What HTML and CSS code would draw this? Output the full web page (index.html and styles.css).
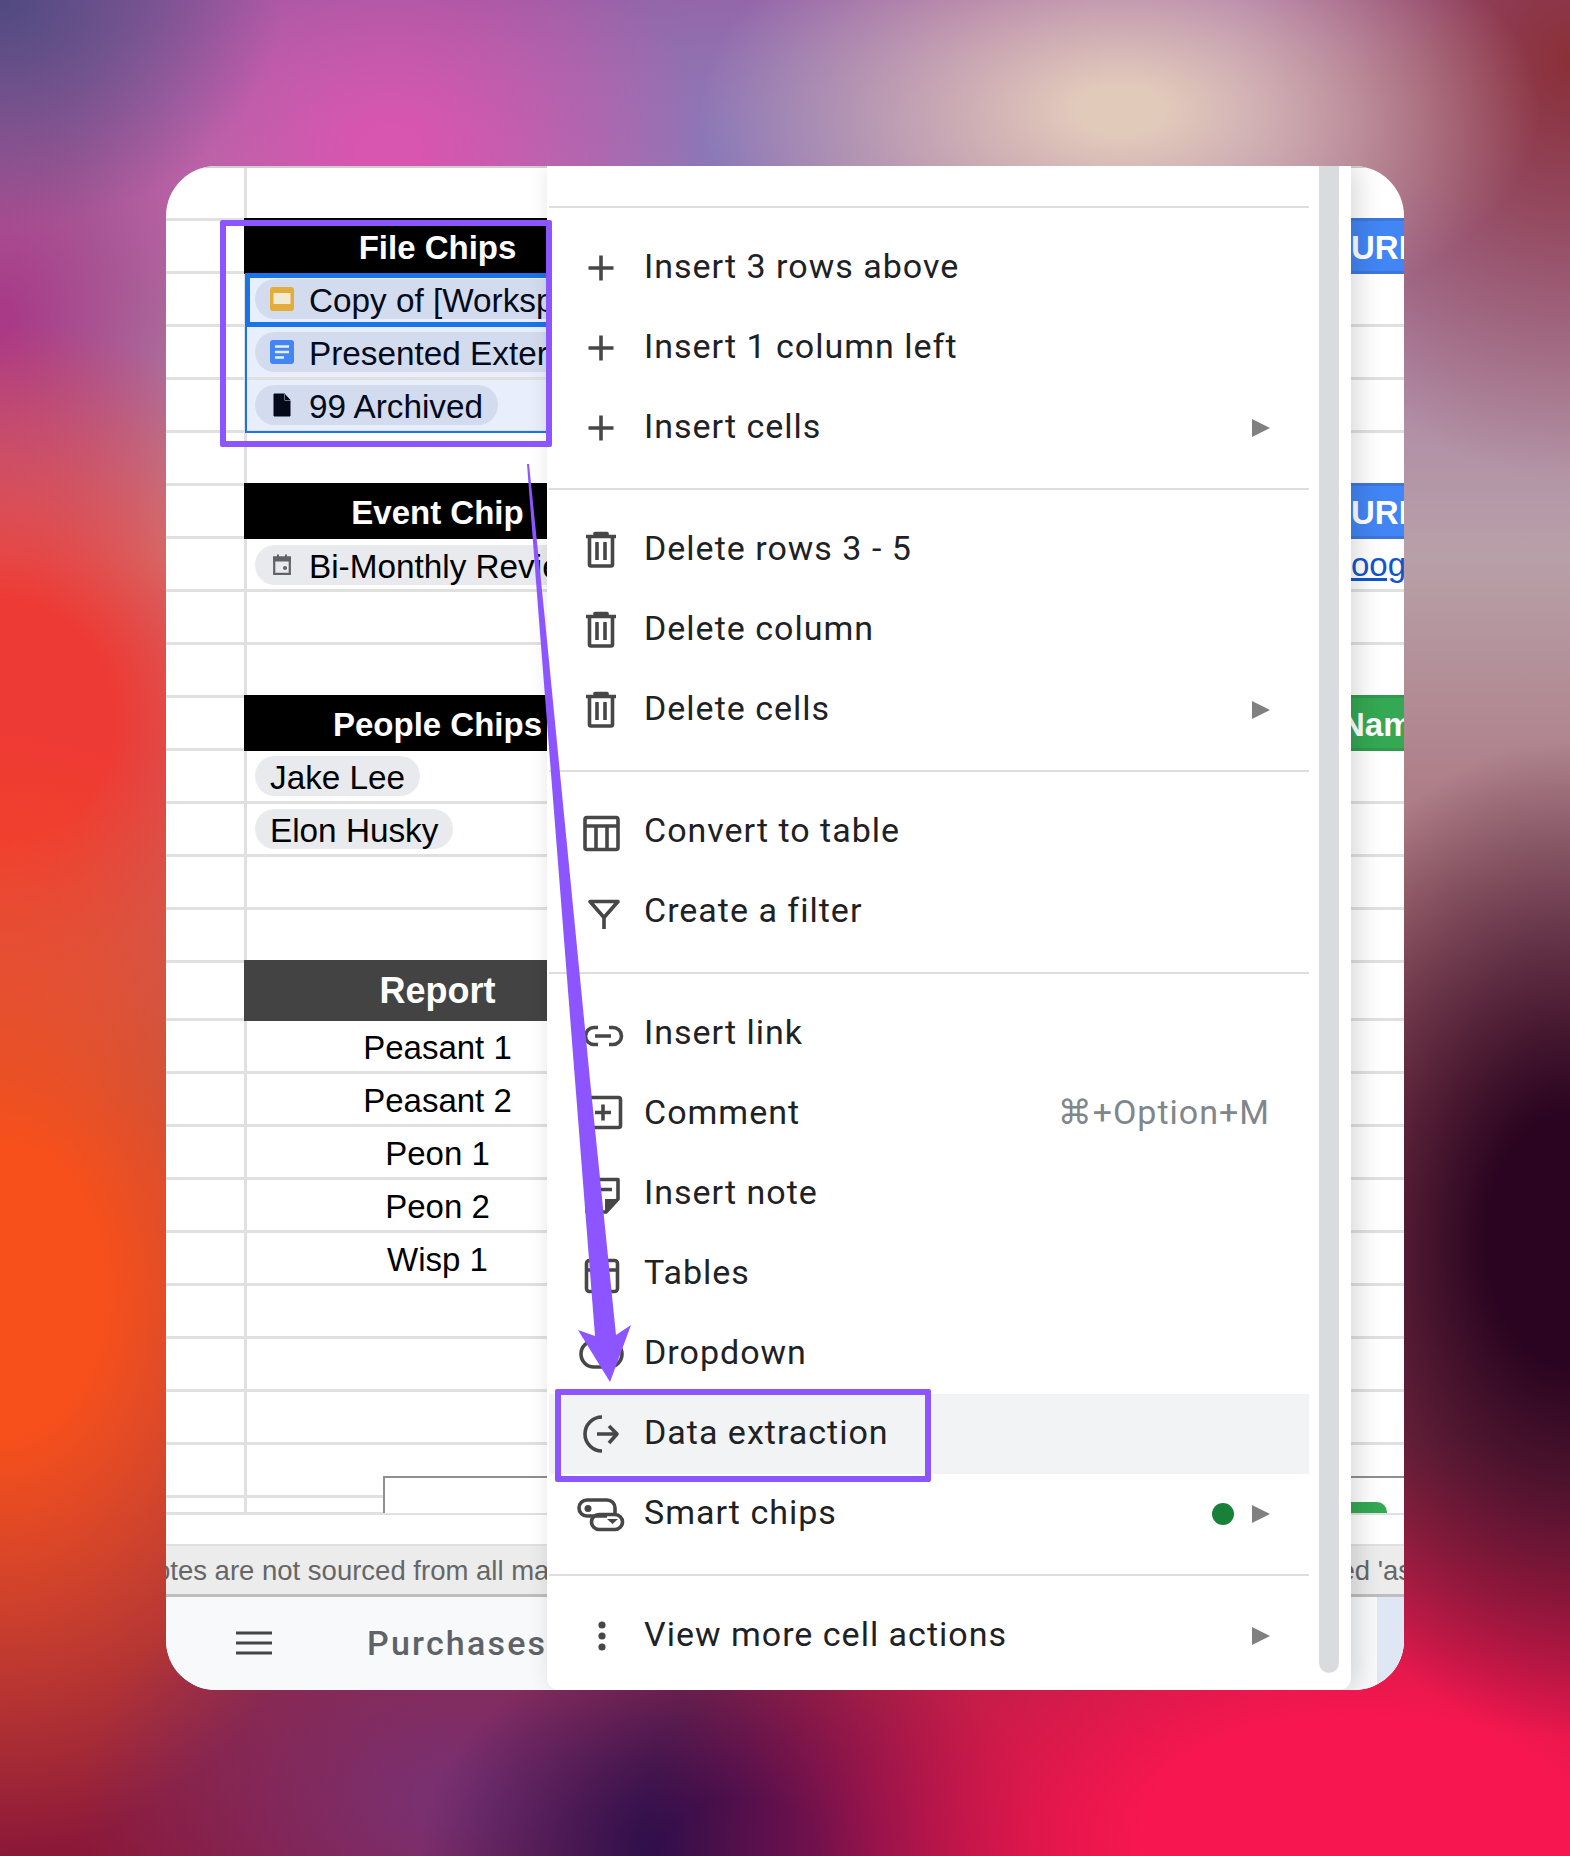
FILE: index.html
```html
<!DOCTYPE html>
<html lang="en">
<head>
<meta charset="utf-8">
<title>Smart chips data extraction</title>
<link rel="stylesheet" href="styles.css">
</head>
<body>
<div class="stage">
  <div class="card">
    <div class="sheet">
      <div class="row first"><div class="gut"></div><div class="cell"></div><div class="right"></div></div>
      <div class="row"><div class="gut"></div><div class="cell head">File Chips</div><div class="right"><div class="rhead blue">URL</div></div></div>
      <div class="row"><div class="gut"></div><div class="cell picked"><span class="chip picked-chip"><svg class="ci" viewBox="0 0 24 24"><rect x="0" y="0" width="24" height="24" rx="3" fill="#e2ad39"/><rect x="3.5" y="6" width="17" height="11" fill="#f3ead2"/></svg>Copy of [Workspace Template]</span></div><div class="right"></div></div>
      <div class="row"><div class="gut"></div><div class="cell picked"><span class="chip picked-chip"><svg class="ci" viewBox="0 0 24 24"><rect x="0" y="0" width="24" height="24" rx="3" fill="#4285f4"/><path d="M5 6.5H19M5 12H19M5 17.5H14" stroke="#e8eefb" stroke-width="2.4"/></svg>Presented External Deck</span></div><div class="right"></div></div>
      <div class="row"><div class="gut"></div><div class="cell picked"><span class="chip picked-chip"><svg class="ci" viewBox="0 0 24 24"><path d="M4 1H15L20 7V23H4Z" fill="#040a1a" stroke="#040a1a" stroke-linejoin="round"/><path d="M14.5 1V7.5H21V1Z" fill="#d3dcee"/><path d="M15 1L20.5 7H15Z" fill="#040a1a"/></svg>99 Archived</span></div><div class="right"></div></div>
      <div class="row"><div class="gut"></div><div class="cell"></div><div class="right"></div></div>
      <div class="row"><div class="gut"></div><div class="cell head">Event Chip</div><div class="right"><div class="rhead blue">URL</div></div></div>
      <div class="row"><div class="gut"></div><div class="cell"><span class="chip"><svg class="ci" viewBox="0 0 24 24"><path d="M4.2 4.5H19.8V20.8H4.2Z" fill="none" stroke="#5f6368" stroke-width="2.2"/><path d="M3 3.5H21V8.5H3Z M7 1.5H9V4H7Z M15 1.5H17V4H15Z" fill="#5f6368"/><rect x="13" y="13" width="4" height="4" rx="2" fill="#5f6368"/></svg>Bi-Monthly Review</span></div><div class="right"><a class="rlink">oogle.com</a></div></div>
      <div class="row"><div class="gut"></div><div class="cell"></div><div class="right"></div></div>
      <div class="row"><div class="gut"></div><div class="cell"></div><div class="right"></div></div>
      <div class="row"><div class="gut"></div><div class="cell head">People Chips</div><div class="right"><div class="rhead green"><span class="nam">Name</span></div></div></div>
      <div class="row"><div class="gut"></div><div class="cell"><span class="chip">Jake Lee</span></div><div class="right"></div></div>
      <div class="row"><div class="gut"></div><div class="cell"><span class="chip">Elon Husky</span></div><div class="right"></div></div>
      <div class="row"><div class="gut"></div><div class="cell"></div><div class="right"></div></div>
      <div class="row"><div class="gut"></div><div class="cell"></div><div class="right"></div></div>
      <div class="row tall"><div class="gut"></div><div class="cell head report">Report</div><div class="right"></div></div>
      <div class="row"><div class="gut"></div><div class="cell mid">Peasant 1</div><div class="right"></div></div>
      <div class="row"><div class="gut"></div><div class="cell mid">Peasant 2</div><div class="right"></div></div>
      <div class="row"><div class="gut"></div><div class="cell mid">Peon 1</div><div class="right"></div></div>
      <div class="row"><div class="gut"></div><div class="cell mid">Peon 2</div><div class="right"></div></div>
      <div class="row"><div class="gut"></div><div class="cell mid">Wisp 1</div><div class="right"></div></div>
      <div class="row"><div class="gut"></div><div class="cell"></div><div class="right"></div></div>
      <div class="row"><div class="gut"></div><div class="cell"></div><div class="right"></div></div>
      <div class="row"><div class="gut"></div><div class="cell"></div><div class="right"></div></div>
      <div class="row"><div class="gut"></div><div class="cell"></div><div class="right"></div></div>
      <div class="row stub"><div class="gut"></div><div class="cell"></div><div class="right"></div></div>
    </div>
    <div class="sheet-gap"></div>
    <div class="status"><span class="note-left">otes are not sourced from all markets</span><span class="note-right">ed 'as</span></div>
    <div class="tabs">
      <svg class="burger" viewBox="0 0 36 24"><path d="M0 2H36M0 12H36M0 22H36" stroke="#444" stroke-width="3"/></svg>
      <span class="tab-name">Purchases</span>
      <span class="tab-tint"></span>
    </div>

    <div class="sel-box"></div>
    <div class="sel-active"></div>
    <div class="embed"><span class="embed-chip"></span></div>

    <div class="menu">
      <div class="menu-list">
        <div class="sep"></div>
        <div class="item"><svg class="ico" viewBox="0 0 48 48"><path d="M11.500 24H36.500M24 11.500V36.500"/></svg><span class="lbl">Insert 3 rows above</span></div>
        <div class="item"><svg class="ico" viewBox="0 0 48 48"><path d="M11.500 24H36.500M24 11.500V36.500"/></svg><span class="lbl">Insert 1 column left</span></div>
        <div class="item"><svg class="ico" viewBox="0 0 48 48"><path d="M11.500 24H36.500M24 11.500V36.500"/></svg><span class="lbl">Insert cells</span><span class="tri"></span></div>
        <div class="sep"></div>
        <div class="item"><svg class="ico" viewBox="0 0 48 48"><path d="M9 10.500H39M18 10.500V7.500H30V10.500M12.500 10.500V38.500Q12.500 40 14 40H34Q35.500 40 35.500 38.500V10.500M20 16V34M28 16V34"/></svg><span class="lbl">Delete rows 3 - 5</span></div>
        <div class="item"><svg class="ico" viewBox="0 0 48 48"><path d="M9 10.500H39M18 10.500V7.500H30V10.500M12.500 10.500V38.500Q12.500 40 14 40H34Q35.500 40 35.500 38.500V10.500M20 16V34M28 16V34"/></svg><span class="lbl">Delete column</span></div>
        <div class="item"><svg class="ico" viewBox="0 0 48 48"><path d="M9 10.500H39M18 10.500V7.500H30V10.500M12.500 10.500V38.500Q12.500 40 14 40H34Q35.500 40 35.500 38.500V10.500M20 16V34M28 16V34"/></svg><span class="lbl">Delete cells</span><span class="tri"></span></div>
        <div class="sep"></div>
        <div class="item"><svg class="ico" viewBox="0 0 48 48"><rect x="8" y="9.500" width="33" height="32" rx="2"/><path d="M8 18H41M19 18V41M30 18V41"/></svg><span class="lbl">Convert to table</span></div>
        <div class="item"><svg class="ico" viewBox="0 0 48 48"><path d="M13 13.500H41L27 29.500ZM27 29.500V41"/></svg><span class="lbl">Create a filter</span></div>
        <div class="sep"></div>
        <div class="item"><svg class="ico" viewBox="0 0 48 48"><path d="M21 17.500H17A8.500 8.500 0 0 0 17 34.500H21M32 17.500H36A8.500 8.500 0 0 1 36 34.500H32M18 26H34"/></svg><span class="lbl">Insert link</span></div>
        <div class="item"><svg class="ico" viewBox="0 0 48 48"><rect x="10.500" y="7.500" width="33" height="30" rx="2"/><path d="M18 22.500H34M26 14.500V30.500"/></svg><span class="lbl">Comment</span><span class="shortcut">⌘+Option+M</span></div>
        <div class="item"><svg class="ico" viewBox="0 0 48 48"><path d="M10 9.500H41V29L29 42H10ZM16 19.500H35"/><path class="solid" d="M28 42V29H41Z"/></svg><span class="lbl">Insert note</span></div>
        <div class="item"><svg class="ico" viewBox="0 0 48 48"><rect x="9.500" y="10.500" width="31" height="31" rx="3"/><path d="M9.500 20H40.500M18 20V41.500M29 10.500V20"/></svg><span class="lbl">Tables</span></div>
        <div class="item"><svg class="ico" viewBox="0 0 48 48"><rect x="4" y="11" width="41" height="26" rx="13"/><path d="M27 22L33 28L39 22"/></svg><span class="lbl">Dropdown</span></div>
        <div class="item hover"><svg class="ico" viewBox="0 0 48 48"><path d="M25 7A17 17 0 1 0 25 41M20 24H40M32 16L40 24L32 33"/></svg><span class="lbl">Data extraction</span></div>
        <div class="item"><svg class="ico" viewBox="0 0 48 48"><path d="M30 26H10A8 8 0 0 1 10 10H30A8 8 0 0 1 38 18V23"/><rect x="14.500" y="24.500" width="31" height="15" rx="7.500"/><circle class="solid" cx="11" cy="18.500" r="3.500"/><path class="solid" d="M30 29H41L35.500 34Z"/></svg><span class="lbl">Smart chips</span><span class="dot"></span><span class="tri"></span></div>
        <div class="sep"></div>
        <div class="item"><svg class="ico" viewBox="0 0 48 48"><circle class="solid" cx="25" cy="13" r="3.600"/><circle class="solid" cx="25" cy="24" r="3.600"/><circle class="solid" cx="25" cy="35" r="3.600"/></svg><span class="lbl">View more cell actions</span><span class="tri"></span></div>
      </div>
      <div class="track"></div>
    </div>

    <div class="callout callout-sheet"></div>
    <div class="callout callout-menu"></div>
    <svg class="arrow" viewBox="0 0 1238 1524"><path d="M361 298L363 298L379 454L424 914L450 1169L465 1159L444 1216L412 1164L429 1170L409 914L373 454Z" fill="#8c55ff"/></svg>
  </div>
</div>
</body>
</html>
```
FILE: styles.css
```css
* { box-sizing: border-box; }
html, body { margin: 0; padding: 0; }
body { font-family: "Liberation Sans", Arial, sans-serif; color: #000; }

.stage {
  width: 1570px;
  height: 1856px;
  padding: 166px;
  background:
    radial-gradient(ellipse 280px 230px at 0% 0%, #4f4a80 0%, rgba(79,74,128,0) 100%),
    radial-gradient(ellipse 320px 240px at 390px 150px, #d855b0 10%, rgba(216,85,176,0) 100%),
    radial-gradient(ellipse 420px 230px at 1120px 110px, #e2cabb 10%, rgba(226,202,187,0) 100%),
    radial-gradient(ellipse 340px 420px at 100% 60px, #8a3038 0%, rgba(138,48,56,0) 100%),
    radial-gradient(ellipse 300px 260px at 720px 150px, #8a78b8 0%, rgba(138,120,184,0) 100%),
    radial-gradient(ellipse 330px 500px at 100% 1240px, #2a0420 25%, rgba(42,4,32,0) 100%),
    radial-gradient(ellipse 720px 400px at 1360px 1840px, #f81650 30%, rgba(248,22,80,0) 100%),
    radial-gradient(ellipse 320px 230px at 740px 1856px, #2a0e4a 25%, rgba(42,14,74,0) 100%),
    radial-gradient(ellipse 380px 260px at 460px 1800px, #7a3070 10%, rgba(122,48,112,0) 100%),
    radial-gradient(ellipse 400px 560px at 0% 1290px, #f8501a 25%, rgba(248,80,26,0) 100%),
    radial-gradient(ellipse 380px 400px at 0% 720px, #ee3a34 30%, rgba(238,58,52,0) 100%),
    radial-gradient(ellipse 260px 300px at 0% 320px, #a83a88 5%, rgba(168,58,136,0) 100%),
    linear-gradient(180deg, #9a5aa0 0%, #b8a0a8 30%, #a0505c 60%, #8c1838 100%);
}

.card {
  position: relative;
  display: flex;
  flex-direction: column;
  width: 1238px;
  height: 1524px;
  border-radius: 50px;
  overflow: hidden;
  background: #fff;
}

/* sheet grid */
.sheet { flex: none; border-top: 2px solid #cfcfcf; }
.row {
  display: grid;
  grid-template-columns: 81px 384px 1fr;
  height: 53px;
  border-bottom: 3px solid #e0e0e0;
}
.row.tall { height: 58px; }
.row.stub { height: 17px; }
.gut { border-right: 3px solid #e0e0e0; }
.cell {
  display: flex;
  align-items: center;
  min-width: 0;
  overflow: hidden;
  padding-left: 8px;
  font-size: 33.300px;
  white-space: nowrap;
}
.cell.head {
  justify-content: center;
  margin: -3px 0 -3px -3px;
  padding: 4px 0 0;
  background: #000;
  color: #fff;
  font-size: 33px;
  font-weight: 700;
}
.cell.report { padding-top: 1px; background: #434343; font-size: 36px; }
.cell.mid { justify-content: center; padding: 3px 0 0; margin-left: -3px; font-size: 33px; }
.cell.picked { background: #e8eefb; }

.chip {
  display: inline-flex;
  align-items: center;
  flex: none;
  height: 40px;
  padding: 3px 15px 0;
  border-radius: 20px;
  background: #e8eaed;
  line-height: 37px;
}
.chip.picked-chip { background: #d3dcee; color: #040a1a; }
.ci { flex: none; width: 24px; height: 24px; margin: -3px 15px 0 0; }

.right { position: relative; min-width: 0; white-space: nowrap; }
.rhead {
  height: calc(100% + 6px);
  margin: -3px 0 -3px 720px;
  padding-top: 4px;
  border-top: 3px solid #3d77dc;
  border-bottom: 3px solid #3d77dc;
  background: #4285f4;
  color: #fff;
  font-size: 33px;
  font-weight: 700;
  line-height: 46px;
}
.rhead.green { background: #34a853; border-color: #2f9a4c; }
.nam { display: block; margin-left: -10px; }
.rlink {
  display: block;
  margin-left: 720px;
  color: #1155cc;
  font-size: 33px;
  line-height: 52px;
  text-decoration: underline;
}

.sheet-gap { flex: none; height: 29px; }
.status {
  flex: none;
  display: flex;
  justify-content: space-between;
  align-items: center;
  height: 53px;
  padding-top: 2px;
  overflow: hidden;
  background: #ececec;
  border-top: 2px solid #e0e0e0;
  border-bottom: 3px solid #bdbdbd;
  color: #666;
  font-size: 27.500px;
  white-space: nowrap;
}
.note-left { margin-left: -11px; }
.note-right { margin-right: -8px; }

.tabs {
  flex: 1;
  display: flex;
  align-items: center;
  padding-left: 70px;
  background: #f8f9fb;
}
.burger { flex: none; width: 36px; height: 24px; margin: 0 95px 2px 0; }
.tab-name {
  padding-bottom: 2px;
  font-family: Roboto, sans-serif;
  font-size: 34px;
  font-weight: 500;
  letter-spacing: 2.200px;
  color: #5f6368;
}
.tab-tint { align-self: stretch; width: 27px; margin-left: auto; background: #dfe7f5; }

/* selection over the sheet */
.sel-box {
  position: absolute;
  left: 79px;
  top: 107px;
  width: 320px;
  height: 160px;
  border: 2px solid #1a73e8;
}
.sel-active {
  position: absolute;
  left: 79px;
  top: 107px;
  width: 320px;
  height: 54px;
  border: 5px solid #1a73e8;
}
.embed {
  position: absolute;
  left: 217px;
  top: 1310px;
  right: 0;
  height: 37px;
  background: #fff;
  border-top: 2px solid #8f8f8f;
  border-left: 2px solid #8f8f8f;
}
.embed-chip {
  position: absolute;
  right: 17px;
  bottom: 0;
  width: 210px;
  height: 11px;
  background: #34a853;
  border-radius: 0 10px 0 0;
}

/* context menu */
.menu {
  position: absolute;
  left: 381px;
  top: 0;
  bottom: 0;
  width: 804px;
  display: flex;
  gap: 10px;
  padding: 0 0 0 2px;
  background: #fff;
  border-radius: 0 0 12px 12px;
  box-shadow: 6px 0 26px rgba(0, 0, 0, .16);
}
.menu-list { flex: none; width: 760px; padding-top: 20px; }
.sep { height: 2px; margin: 20px 0; background: #dddde2; }
.item {
  display: flex;
  align-items: center;
  height: 80px;
  padding: 0 39px 0 28px;
  color: #202124;
  font-family: Roboto, sans-serif;
  font-size: 34px;
  letter-spacing: 1px;
}
.item.hover { background: #f1f3f4; }
.ico {
  flex: none;
  width: 48px;
  height: 48px;
  margin-right: 19px;
  fill: none;
  stroke: #474747;
  stroke-width: 3.600px;
  stroke-linejoin: round;
}
.ico .solid { fill: #474747; stroke: none; }
.lbl { flex: none; padding-bottom: 4px; white-space: nowrap; }
.shortcut {
  margin-left: auto;
  padding-bottom: 4px;
  color: #80868b;
  font-family: Roboto, "DejaVu Sans", sans-serif;
}
.tri {
  flex: none;
  width: 0;
  height: 0;
  margin-left: auto;
  border-left: 18px solid #808080;
  border-top: 9px solid transparent;
  border-bottom: 9px solid transparent;
}
.dot {
  flex: none;
  width: 22px;
  height: 22px;
  margin-left: auto;
  border-radius: 50%;
  background: #188038;
}
.dot + .tri { margin-left: 18px; }
.track {
  flex: none;
  width: 20px;
  margin-bottom: 17px;
  border-radius: 0 0 10px 10px;
  background: #d9dbdf;
}

/* annotations */
.callout {
  position: absolute;
  border: 6px solid #8c55ff;
  border-radius: 2px;
}
.callout-sheet { left: 54px; top: 54px; width: 332px; height: 227px; }
.callout-menu { left: 389px; top: 1223px; width: 376px; height: 93px; }
.arrow {
  position: absolute;
  left: 0;
  top: 0;
  width: 1238px;
  height: 1524px;
  pointer-events: none;
}
```
